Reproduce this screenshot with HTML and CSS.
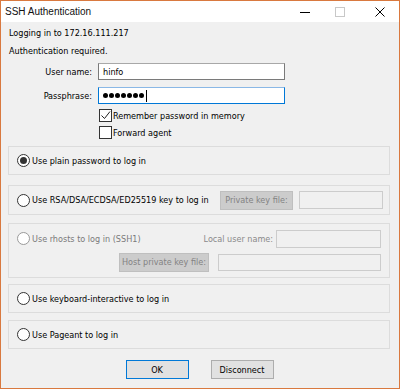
FILE: index.html
```html
<!DOCTYPE html>
<html lang="en">

<head>
    <meta charset="UTF-8">
    <title>SSH Authentication</title>
    <link rel="stylesheet" href="styles.css">
</head>

<body>
    <div class="window">
        <div class="titlebar">
            <span class="title">SSH Authentication</span>
            <div class="controls">
                <svg class="ctl-min" width="10" height="10" viewBox="0 0 10 10"><path d="M0 5.5h10" stroke="#000" stroke-width="1"/></svg>
                <svg class="ctl-max" width="10" height="10" viewBox="0 0 10 10"><rect x="0.5" y="0.5" width="9" height="9" fill="none" stroke="#c8c8c8"/></svg>
                <svg class="ctl-close" width="10" height="10" viewBox="0 0 10 10"><path d="M0.5 0.5l9 9M9.5 0.5l-9 9" stroke="#000" stroke-width="1"/></svg>
            </div>
        </div>

        <div class="dialog">
            <p class="info">Logging in to 172.16.111.217</p>
            <p class="info">Authentication required.</p>

            <div class="field">
                <label>User name:</label>
                <div class="textbox">hinfo</div>
            </div>
            <div class="field">
                <label>Passphrase:</label>
                <div class="textbox focused">
                    <span class="dot"></span><span class="dot"></span><span class="dot"></span><span class="dot"></span><span class="dot"></span><span class="dot"></span><span class="dot"></span><span class="caret"></span>
                </div>
            </div>

            <div class="check first">
                <span class="box"><svg width="11" height="11" viewBox="0 0 11 11"><path d="M1.5 5.5l3 3 5.5-7" fill="none" stroke="#222" stroke-width="1"/></svg></span>
                Remember password in memory
            </div>
            <div class="check">
                <span class="box"></span>
                Forward agent
            </div>

            <!-- auth methods -->
            <div class="group g-plain">
                <span class="radio checked"></span>Use plain password to log in
            </div>

            <div class="group g-rsa">
                <div class="opt"><span class="radio"></span>Use RSA/DSA/ECDSA/ED25519 key to log in</div>
                <span class="btn disabled key-btn">Private key file:</span>
                <span class="textbox disabled key-box"></span>
            </div>

            <div class="group g-rhosts">
                <div class="row">
                    <div class="opt off"><span class="radio"></span>Use rhosts to log in (SSH1)</div>
                    <span class="dim-label">Local user name:</span>
                    <span class="textbox disabled local-box"></span>
                </div>
                <div class="row second">
                    <span class="btn disabled host-btn">Host private key file:</span>
                    <span class="textbox disabled host-box"></span>
                </div>
            </div>

            <div class="group g-kbd">
                <span class="radio"></span>Use keyboard-interactive to log in
            </div>

            <div class="group g-pageant">
                <span class="radio"></span>Use Pageant to log in
            </div>

            <div class="buttons">
                <span class="btn default">OK</span>
                <span class="btn">Disconnect</span>
            </div>
        </div>
    </div>
</body>

</html>
```

FILE: styles.css
```css
body {
    margin: 0;
}

.window {
    width: 400px;
    height: 389px;
    box-sizing: border-box;
    border: 1px solid #d9793f;
    background-color: #f0f0f0;
    font-family: "DejaVu Sans", "Liberation Sans", sans-serif;
    font-stretch: condensed;
    font-size: 9px;
    color: #000;
    white-space: nowrap;
}

/* title bar */
.titlebar {
    height: 21px;
    background-color: #fff;
    display: flex;
    align-items: center;
}

.title {
    padding-left: 4px;
    font-family: "Liberation Sans", Arial, sans-serif;
    font-stretch: normal;
    font-size: 10px;
    color: #111;
}

.controls {
    margin-left: auto;
    padding-right: 14px;
    display: flex;
    align-items: center;
}

.ctl-max {
    margin-left: 25px;
}

.ctl-close {
    margin-left: 30px;
}

/* dialog body */
.dialog {
    padding: 2px 9px 0 7px;
}

.info {
    margin: 0;
    height: 18px;
    line-height: 18px;
    padding-left: 1px;
}

.field {
    display: flex;
    align-items: center;
    margin-top: 3px;
}

.field + .field {
    margin-top: 7px;
}

.field label {
    width: 84px;
    text-align: right;
    margin-right: 6px;
}

.textbox {
    box-sizing: border-box;
    width: 187px;
    height: 17px;
    background-color: #fff;
    border: 1px solid #7a7a7a;
    border-top-color: #a8a8a8;
    padding-left: 4px;
    display: flex;
    align-items: center;
}

.textbox.focused {
    border-color: #0078d7;
    border-top-color: #8ab8e6;
}

.dot {
    width: 5px;
    height: 5px;
    border-radius: 50%;
    background-color: #000;
    margin-right: 1px;
}

.caret {
    width: 1px;
    height: 12px;
    background-color: #000;
    margin-left: 1px;
}

.check {
    display: flex;
    align-items: center;
    margin-left: 91px;
    margin-top: 4px;
    height: 13px;
}

.check.first {
    margin-top: 5px;
}

.box {
    box-sizing: border-box;
    width: 13px;
    height: 13px;
    border: 1px solid #333;
    background-color: #fff;
    margin-right: 1px;
    display: flex;
    align-items: center;
    justify-content: center;
}

/* group boxes */
.group {
    box-sizing: border-box;
    border: 1px solid #dcdcdc;
    display: flex;
    align-items: center;
    padding-left: 8px;
    height: 29px;
}

.g-plain {
    margin-top: 7px;
}

.g-rsa {
    margin-top: 10px;
    height: 30px;
}

.g-rhosts {
    margin-top: 8px;
    height: 55px;
    flex-direction: column;
    align-items: stretch;
    justify-content: center;
}

.g-kbd {
    margin-top: 6px;
}

.g-pageant {
    margin-top: 7px;
}

.radio {
    box-sizing: border-box;
    width: 13px;
    height: 13px;
    border: 1px solid #333;
    border-radius: 50%;
    background-color: #fff;
    margin-right: 2px;
    display: inline-flex;
    align-items: center;
    justify-content: center;
    flex-shrink: 0;
}

.radio.checked::after {
    content: "";
    width: 7px;
    height: 7px;
    border-radius: 50%;
    background-color: #333;
}

.opt {
    display: flex;
    align-items: center;
}

.g-rsa .opt {
    width: 203px;
}

.opt.off {
    color: #7a7a7a;
    width: 180px;
}

.opt.off .radio {
    border-color: #9a9a9a;
}

.btn {
    box-sizing: border-box;
    height: 19px;
    display: inline-flex;
    align-items: center;
    justify-content: center;
    background-color: #e1e1e1;
    border: 1px solid #adadad;
}

.btn.disabled {
    background-color: #cccccc;
    border-color: #bfbfbf;
    color: #838383;
}

.textbox.disabled {
    background-color: #f0f0f0;
    border: 1px solid #cccccc;
}

.key-btn {
    width: 73px;
}

.key-box {
    width: 84px;
    height: 18px;
    margin-left: 6px;
}

.row {
    display: flex;
    align-items: center;
}

.row.second {
    margin-top: 5px;
    padding-left: 102px;
}

.dim-label {
    width: 76px;
    text-align: right;
    color: #8a8a8a;
    margin-right: 3px;
}

.local-box {
    width: 105px;
    height: 18px;
}

.host-btn {
    width: 90px;
}

.host-box {
    width: 163px;
    margin-left: 9px;
}

.buttons {
    display: flex;
    justify-content: center;
    gap: 22px;
    margin-top: 11px;
    padding-left: 1px;
}

.buttons .btn {
    width: 63px;
}

.btn.default {
    border-color: #0078d7;
}
```
